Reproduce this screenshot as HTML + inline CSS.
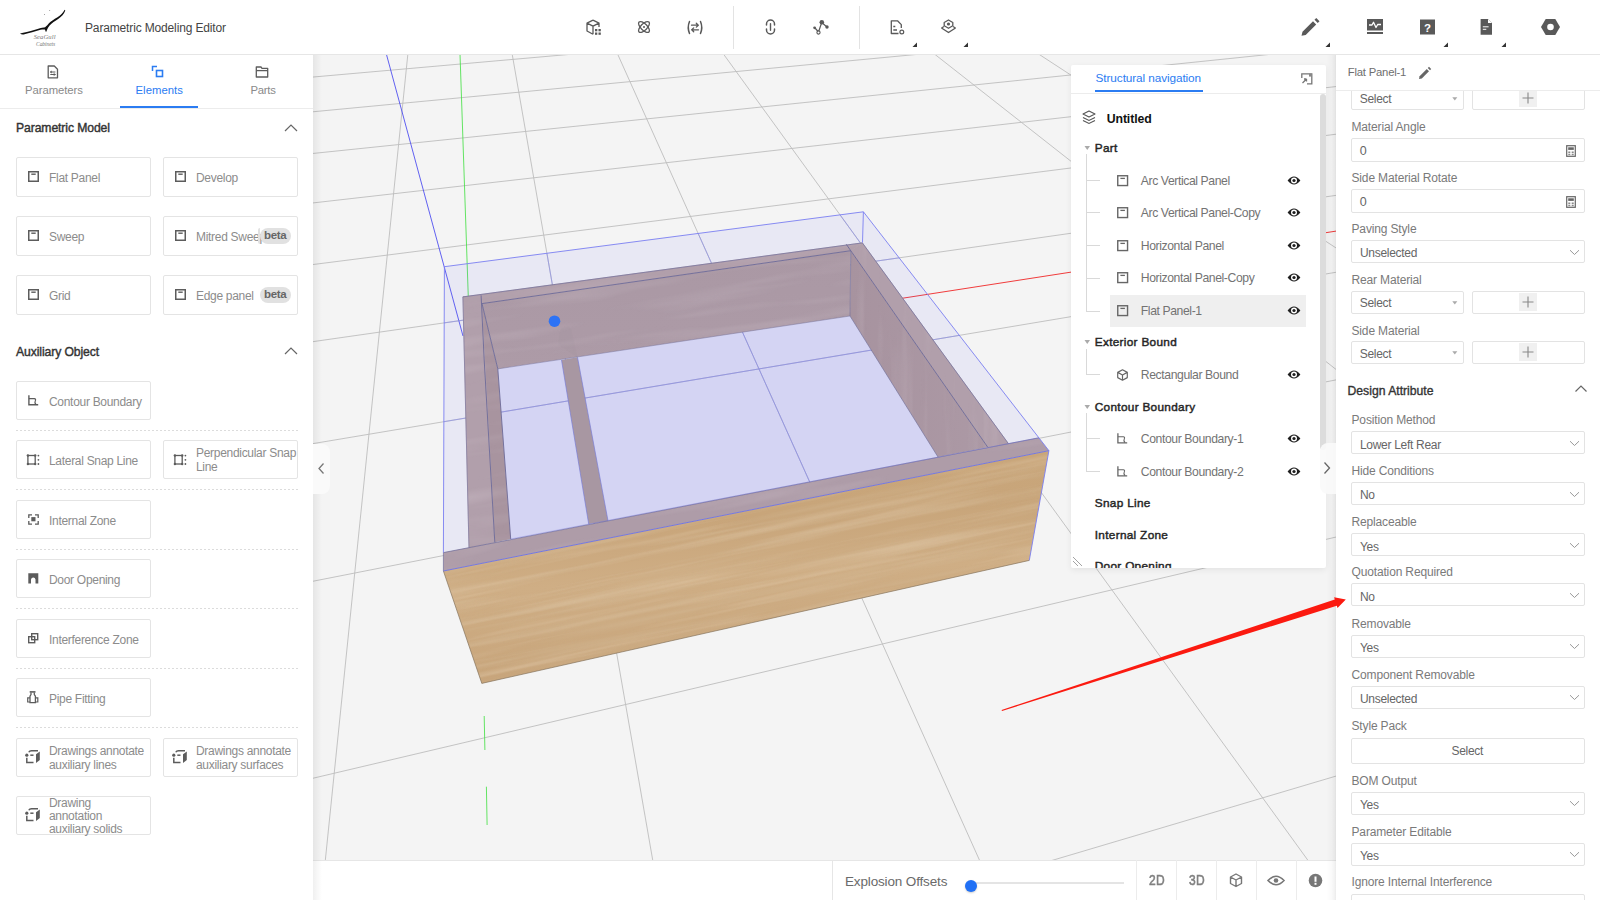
<!DOCTYPE html>
<html><head><meta charset="utf-8"><style>
*{margin:0;padding:0;box-sizing:border-box}
html,body{width:1600px;height:900px;overflow:hidden;background:#fff}
body{position:relative;font-family:"Liberation Sans", sans-serif}
.t{position:absolute;line-height:1;white-space:nowrap}
.b{position:absolute}
svg.b{overflow:visible}
</style></head><body>
<div class="b" style="left:0px;top:0px;width:1600px;height:55px;background:#fff;border-bottom:1px solid #e6e6e6"></div><svg class="b" style="left:15px;top:5px;" width="56" height="46" viewBox="0 0 56 46">
<path d="M5 28.4 C 9 27.9, 14 26.8, 20 24.8 C 23.5 23.7, 26.5 23, 29 22.6 C 30.5 22.3, 31.8 21, 33.5 18.8 C 35.5 16.5, 39 14.3, 42.5 12.3 C 45.5 10.5, 48 8, 49.6 4.8 L 50.3 5.4 C 49 8.8, 46.5 11.6, 43.5 13.7 C 40 16, 36.8 17.8, 34.6 20.4 C 33.3 22, 32.5 23.3, 32 25 L 31 27.3 L 29.9 24.6 C 29 24.3, 27.5 24.3, 25.5 24.8 C 20 26.2, 14 28.4, 9.5 29.3 C 7.5 29.7, 6 29.4, 5 28.4 Z" fill="#111"/>
<circle cx="29.5" cy="9.4" r="0.5" fill="#888"/><circle cx="34.7" cy="5.5" r="0.5" fill="#888"/>
<text x="18.7" y="34.2" font-family="Liberation Serif" font-style="italic" font-size="6.6" fill="#777" letter-spacing="0.1">SeaGull</text>
<text x="21" y="40.6" font-family="Liberation Serif" font-style="italic" font-size="5.6" fill="#777" letter-spacing="-0.1">Cabinets</text>
</svg><div class="t" style="left:85.0px;top:21.8px;font-size:12px;color:#444;font-weight:normal;letter-spacing:-0.15px;">Parametric Modeling Editor</div><svg class="b" style="left:585px;top:19px;" width="18" height="18" viewBox="0 0 18 18">
<path d="M8 1.2 L14 4.2 L14 8 M8 1.2 L2 4.2 L2 12 L8 15.3 M2 4.2 L8 7.2 L14 4.2 M8 7.2 L8 15.3" fill="none" stroke="#595959" stroke-width="1.3" stroke-linejoin="round"/>
<rect x="10" y="10" width="2.3" height="2.3" fill="#595959"/><rect x="13.5" y="10" width="2.3" height="2.3" fill="#595959"/>
<rect x="10" y="13.5" width="2.3" height="2.3" fill="#595959"/><rect x="13.5" y="13.5" width="2.3" height="2.3" fill="#595959"/>
</svg><svg class="b" style="left:636px;top:19px;" width="16" height="16" viewBox="0 0 16 16">
<ellipse cx="8" cy="8" rx="7" ry="3.2" transform="rotate(45 8 8)" fill="none" stroke="#595959" stroke-width="1.3"/>
<ellipse cx="8" cy="8" rx="7" ry="3.2" transform="rotate(-45 8 8)" fill="none" stroke="#595959" stroke-width="1.3"/>
<circle cx="8" cy="8" r="1" fill="#595959"/>
</svg><svg class="b" style="left:686px;top:20px;" width="18" height="15" viewBox="0 0 18 15">
<path d="M3.5 1.5 Q1 7.5 3.5 13.5 M14.5 1.5 Q17 7.5 14.5 13.5" fill="none" stroke="#595959" stroke-width="1.5" stroke-linecap="round"/>
<path d="M5.5 5.2 H12 M10.3 3.3 L12.3 5.2 L10.3 7.1 M12.5 9.8 H6 M7.7 7.9 L5.7 9.8 L7.7 11.7" fill="none" stroke="#595959" stroke-width="1.3" stroke-linecap="round" stroke-linejoin="round"/>
</svg><div class="b" style="left:733px;top:6px;width:1px;height:43px;background:#e3e3e3"></div><div class="b" style="left:859px;top:6px;width:1px;height:43px;background:#e3e3e3"></div><svg class="b" style="left:763px;top:19px;" width="15" height="16" viewBox="0 0 15 16">
<path d="M3.5 6 V5 A4 4 0 0 1 11.5 5 V6 M3.5 10 V11 A4 4 0 0 0 11.5 11 V10" fill="none" stroke="#595959" stroke-width="1.5" stroke-linecap="round"/>
<path d="M7.5 4.8 V11.2" stroke="#595959" stroke-width="1.4" stroke-linecap="round"/>
</svg><svg class="b" style="left:812px;top:19px;" width="18" height="16" viewBox="0 0 18 16">
<path d="M3 9 L6.5 13 L9.7 3.6 L15 8" fill="none" stroke="#595959" stroke-width="1.2"/>
<circle cx="9.8" cy="3.3" r="2.3" fill="#595959"/>
<circle cx="15" cy="8" r="1.7" fill="#595959"/>
<circle cx="2.6" cy="8.8" r="1.4" fill="#595959"/>
<circle cx="6.5" cy="13.5" r="1.6" fill="#fff" stroke="#595959" stroke-width="1.1"/>
</svg><svg class="b" style="left:889px;top:19px;" width="17" height="17" viewBox="0 0 17 17">
<path d="M9.5 14.5 H2.3 V1.8 H8.5 L12.3 5.6 V9" fill="none" stroke="#595959" stroke-width="1.3" stroke-linejoin="round"/>
<path d="M4.3 7.5 H6.3 M4.3 11 H8" stroke="#595959" stroke-width="1.3"/>
<circle cx="12.8" cy="13" r="1.9" fill="none" stroke="#595959" stroke-width="1.2"/>
</svg><svg class="b" style="left:912px;top:42px;" width="6" height="6" viewBox="0 0 6 6"><path d="M5 0.5 V5 H0.5 Z" fill="#333"/></svg><svg class="b" style="left:940px;top:19px;" width="17" height="16" viewBox="0 0 17 16">
<path d="M1.5 9 L8.5 13.5 L15.5 9" fill="none" stroke="#595959" stroke-width="1.4" stroke-linejoin="round"/>
<path d="M4 7.5 L1.5 9 M13 7.5 L15.5 9" stroke="#595959" stroke-width="1.3"/>
<path d="M8.5 1 L12.8 3.5 V6.8 L8.5 9.3 L4.2 6.8 V3.5 Z" fill="none" stroke="#595959" stroke-width="1.3" stroke-linejoin="round"/>
<circle cx="8.5" cy="5" r="1.6" fill="#595959"/>
</svg><svg class="b" style="left:963px;top:42px;" width="6" height="6" viewBox="0 0 6 6"><path d="M5 0.5 V5 H0.5 Z" fill="#333"/></svg><svg class="b" style="left:1300px;top:17px;" width="22" height="20" viewBox="0 0 22 20">
<path d="M1.5 18.8 L2.5 14.8 L13 4.3 L16.2 7.5 L5.7 18 Z" fill="#595959"/>
<path d="M14.5 2.8 L16.3 1 L19.5 4.2 L17.7 6 Z" fill="#595959"/>
</svg><svg class="b" style="left:1325px;top:42px;" width="6" height="6" viewBox="0 0 6 6"><path d="M5 0.5 V5 H0.5 Z" fill="#333"/></svg><svg class="b" style="left:1366px;top:18px;" width="18" height="17" viewBox="0 0 18 17">
<rect x="1" y="1" width="16" height="11.5" fill="#595959"/>
<path d="M3 7 H6 L7.5 4.3 L10 9.5 L11.7 6.5 H15" fill="none" stroke="#fff" stroke-width="1.3" stroke-linejoin="round"/>
<rect x="1" y="14" width="16" height="2" fill="#595959"/>
</svg><svg class="b" style="left:1419px;top:19px;" width="17" height="17" viewBox="0 0 17 17">
<rect x="1" y="0.5" width="15" height="15" fill="#595959"/>
<text x="8.5" y="12.8" text-anchor="middle" font-family="Liberation Sans" font-weight="bold" font-size="11.5" fill="#fff">?</text>
</svg><svg class="b" style="left:1443px;top:42px;" width="6" height="6" viewBox="0 0 6 6"><path d="M5 0.5 V5 H0.5 Z" fill="#333"/></svg><svg class="b" style="left:1480px;top:18px;" width="14" height="18" viewBox="0 0 14 18">
<path d="M0.6 1 H8 L12 5 V16.7 H0.6 Z" fill="#595959"/>
<path d="M8 1 V5 H12" fill="#fff"/>
<path d="M2.8 8.8 H8.6 M2.8 11.3 H6.3" stroke="#fff" stroke-width="1"/>
</svg><svg class="b" style="left:1501px;top:42px;" width="6" height="6" viewBox="0 0 6 6"><path d="M5 0.5 V5 H0.5 Z" fill="#333"/></svg><svg class="b" style="left:1540px;top:18px;" width="21" height="18" viewBox="0 0 21 18">
<path d="M5.7 1 H15.3 L20 9 L15.3 17 H5.7 L1 9 Z" fill="#595959"/>
<circle cx="10.5" cy="9" r="3.3" fill="#fff"/>
</svg><div class="b" style="left:0px;top:55px;width:313px;height:845px;background:#fff"></div><svg class="b" style="left:46px;top:65px;" width="14" height="14" viewBox="0 0 14 14">
<path d="M2.2 1 H8.3 L11.5 4.2 V12.8 H2.2 Z" fill="none" stroke="#5c5c5c" stroke-width="1.3" stroke-linejoin="round"/>
<path d="M4.3 7 H9.4 M4.3 9.5 H9.4" stroke="#5c5c5c" stroke-width="1"/>
<path d="M6 6 L4.3 7 L6 8 M7.7 8.5 L9.4 9.5 L7.7 10.5" fill="none" stroke="#5c5c5c" stroke-width="0.9"/>
</svg><svg class="b" style="left:151px;top:65px;" width="14" height="14" viewBox="0 0 14 14">
<path d="M1.5 6 V1.5 H6" fill="none" stroke="#2b7cf2" stroke-width="1.5"/>
<rect x="5.5" y="5.5" width="6" height="6" fill="none" stroke="#2b7cf2" stroke-width="1.6"/>
</svg><svg class="b" style="left:255px;top:65px;" width="14" height="14" viewBox="0 0 14 14">
<path d="M1.3 2 H6 L7 3.3 H12.7 V12 H1.3 Z" fill="none" stroke="#5c5c5c" stroke-width="1.3" stroke-linejoin="round"/>
<path d="M1.3 5.6 H12.7" stroke="#5c5c5c" stroke-width="1.3"/>
</svg><div class="t" style="left:25.0px;top:85.4px;font-size:11.3px;color:#8a8a8a;font-weight:normal;letter-spacing:-0.05px;">Parameters</div><div class="t" style="left:135.5px;top:85.4px;font-size:11.3px;color:#2b7cf2;font-weight:normal;letter-spacing:0.05px;">Elements</div><div class="t" style="left:250.5px;top:85.4px;font-size:11.3px;color:#8a8a8a;font-weight:normal;letter-spacing:-0.25px;">Parts</div><div class="b" style="left:0px;top:108px;width:313px;height:1px;background:#ececec"></div><div class="b" style="left:120px;top:106px;width:78px;height:2px;background:#2b7cf2"></div><div class="t" style="left:16.0px;top:122.3px;font-size:12.2px;color:#333;font-weight:normal;letter-spacing:-0.1px;-webkit-text-stroke:0.4px #333;">Parametric Model</div><svg class="b" style="left:284px;top:122.5px;" width="14" height="10" viewBox="0 0 14 10"><path d="M1 8 L7 2 L13 8" fill="none" stroke="#666" stroke-width="1.2"/></svg><div class="t" style="left:16.0px;top:346.2px;font-size:12.2px;color:#333;font-weight:normal;letter-spacing:-0.1px;-webkit-text-stroke:0.4px #333;">Auxiliary Object</div><svg class="b" style="left:284px;top:346px;" width="14" height="10" viewBox="0 0 14 10"><path d="M1 8 L7 2 L13 8" fill="none" stroke="#666" stroke-width="1.2"/></svg><div class="b" style="left:16px;top:157px;width:135px;height:40px;background:#fff;border:1px solid #e4e4e4;border-radius:2px"></div><svg class="b" style="left:28px;top:171px;" width="12" height="12" viewBox="0 0 12 12"><rect x="0.75" y="0.75" width="9.5" height="9.5" fill="none" stroke="#5c5c5c" stroke-width="1.5"/><path d="M3.3 3.2 H7.7" stroke="#5c5c5c" stroke-width="1.4"/></svg><div class="t" style="left:49.0px;top:171.8px;font-size:12px;color:#8c8c8c;font-weight:normal;letter-spacing:-0.3px;">Flat Panel</div><div class="b" style="left:163px;top:157px;width:135px;height:40px;background:#fff;border:1px solid #e4e4e4;border-radius:2px"></div><svg class="b" style="left:175px;top:171px;" width="12" height="12" viewBox="0 0 12 12"><rect x="0.75" y="0.75" width="9.5" height="9.5" fill="none" stroke="#5c5c5c" stroke-width="1.5"/><path d="M3.3 3.2 H7.7" stroke="#5c5c5c" stroke-width="1.4"/></svg><div class="t" style="left:196.0px;top:171.8px;font-size:12px;color:#8c8c8c;font-weight:normal;letter-spacing:-0.3px;">Develop</div><div class="b" style="left:16px;top:216px;width:135px;height:40px;background:#fff;border:1px solid #e4e4e4;border-radius:2px"></div><svg class="b" style="left:28px;top:230px;" width="12" height="12" viewBox="0 0 12 12"><rect x="0.75" y="0.75" width="9.5" height="9.5" fill="none" stroke="#5c5c5c" stroke-width="1.5"/><path d="M3.3 3.2 H7.7" stroke="#5c5c5c" stroke-width="1.4"/></svg><div class="t" style="left:49.0px;top:230.8px;font-size:12px;color:#8c8c8c;font-weight:normal;letter-spacing:-0.3px;">Sweep</div><div class="b" style="left:163px;top:216px;width:135px;height:40px;background:#fff;border:1px solid #e4e4e4;border-radius:2px"></div><svg class="b" style="left:175px;top:230px;" width="12" height="12" viewBox="0 0 12 12"><rect x="0.75" y="0.75" width="9.5" height="9.5" fill="none" stroke="#5c5c5c" stroke-width="1.5"/><path d="M3.3 3.2 H7.7" stroke="#5c5c5c" stroke-width="1.4"/></svg><div class="t" style="left:196.0px;top:230.8px;font-size:12px;color:#8c8c8c;font-weight:normal;letter-spacing:-0.3px;">Mitred Sweep</div><div class="b" style="left:16px;top:275px;width:135px;height:40px;background:#fff;border:1px solid #e4e4e4;border-radius:2px"></div><svg class="b" style="left:28px;top:289px;" width="12" height="12" viewBox="0 0 12 12"><rect x="0.75" y="0.75" width="9.5" height="9.5" fill="none" stroke="#5c5c5c" stroke-width="1.5"/><path d="M3.3 3.2 H7.7" stroke="#5c5c5c" stroke-width="1.4"/></svg><div class="t" style="left:49.0px;top:289.8px;font-size:12px;color:#8c8c8c;font-weight:normal;letter-spacing:-0.3px;">Grid</div><div class="b" style="left:163px;top:275px;width:135px;height:40px;background:#fff;border:1px solid #e4e4e4;border-radius:2px"></div><svg class="b" style="left:175px;top:289px;" width="12" height="12" viewBox="0 0 12 12"><rect x="0.75" y="0.75" width="9.5" height="9.5" fill="none" stroke="#5c5c5c" stroke-width="1.5"/><path d="M3.3 3.2 H7.7" stroke="#5c5c5c" stroke-width="1.4"/></svg><div class="t" style="left:196.0px;top:289.8px;font-size:12px;color:#8c8c8c;font-weight:normal;letter-spacing:-0.3px;">Edge panel</div><div class="b" style="left:260px;top:228px;width:31px;height:16px;background:#e1e1e1;border-radius:8px"></div><div class="t" style="left:264.0px;top:230.3px;font-size:11.5px;color:#666;font-weight:bold;letter-spacing:-0.3px;">beta</div><div class="b" style="left:260px;top:287px;width:31px;height:16px;background:#e1e1e1;border-radius:8px"></div><div class="t" style="left:264.0px;top:289.3px;font-size:11.5px;color:#666;font-weight:bold;letter-spacing:-0.3px;">beta</div><div class="b" style="left:258px;top:228px;width:2px;height:16px;background:#e1e1e1;border-radius:8px 0 0 8px"></div><div class="b" style="left:16px;top:381px;width:135px;height:39px;background:#fff;border:1px solid #e4e4e4;border-radius:2px"></div><svg class="b" style="left:28px;top:395px;" width="12" height="12" viewBox="0 0 12 12"><path d="M0.9 0.2 V9.8 H10.2" fill="none" stroke="#5c5c5c" stroke-width="1.4"/><path d="M0.9 3.7 H6.3 Q8.2 4 7.3 5.8 Q6.3 7.5 8 9.6" fill="none" stroke="#5c5c5c" stroke-width="1.2"/></svg><div class="t" style="left:49.0px;top:395.8px;font-size:12px;color:#8c8c8c;font-weight:normal;letter-spacing:-0.3px;">Contour Boundary</div><div class="b" style="left:16px;top:440px;width:135px;height:39px;background:#fff;border:1px solid #e4e4e4;border-radius:2px"></div><svg class="b" style="left:27px;top:454px;" width="13" height="12" viewBox="0 0 13 12"><rect x="0.9" y="1.5" width="7.3" height="8.5" fill="none" stroke="#5c5c5c" stroke-width="1.3"/><circle cx="0.9" cy="1.5" r="1.2" fill="#5c5c5c"/><circle cx="8.2" cy="1.5" r="1.2" fill="#5c5c5c"/><circle cx="0.9" cy="10" r="1.2" fill="#5c5c5c"/><circle cx="8.2" cy="10" r="1.2" fill="#5c5c5c"/><circle cx="11.4" cy="1.6" r="0.9" fill="#5c5c5c"/><circle cx="11.4" cy="5.8" r="0.9" fill="#5c5c5c"/><circle cx="11.4" cy="10" r="0.9" fill="#5c5c5c"/></svg><div class="t" style="left:49.0px;top:454.8px;font-size:12px;color:#8c8c8c;font-weight:normal;letter-spacing:-0.3px;">Lateral Snap Line</div><div class="b" style="left:163px;top:440px;width:135px;height:39px;background:#fff;border:1px solid #e4e4e4;border-radius:2px"></div><svg class="b" style="left:174px;top:454px;" width="13" height="12" viewBox="0 0 13 12"><rect x="0.9" y="1.5" width="7.3" height="8.5" fill="none" stroke="#5c5c5c" stroke-width="1.3"/><circle cx="0.9" cy="1.5" r="1.2" fill="#5c5c5c"/><circle cx="8.2" cy="1.5" r="1.2" fill="#5c5c5c"/><circle cx="0.9" cy="10" r="1.2" fill="#5c5c5c"/><circle cx="8.2" cy="10" r="1.2" fill="#5c5c5c"/><circle cx="11.4" cy="1.6" r="0.9" fill="#5c5c5c"/><circle cx="11.4" cy="5.8" r="0.9" fill="#5c5c5c"/><circle cx="11.4" cy="10" r="0.9" fill="#5c5c5c"/></svg><div class="t" style="left:196.0px;top:447.0px;font-size:12px;color:#8c8c8c;font-weight:normal;letter-spacing:-0.3px;">Perpendicular Snap</div><div class="t" style="left:196.0px;top:460.6px;font-size:12px;color:#8c8c8c;font-weight:normal;letter-spacing:-0.3px;">Line</div><div class="b" style="left:16px;top:500px;width:135px;height:39px;background:#fff;border:1px solid #e4e4e4;border-radius:2px"></div><svg class="b" style="left:28px;top:514px;" width="12" height="12" viewBox="0 0 12 12"><path d="M0.8 4 V0.8 H4 M7 0.8 H10.2 V4 M10.2 7 V10.2 H7 M4 10.2 H0.8 V7" fill="none" stroke="#5c5c5c" stroke-width="1.3"/><rect x="3.3" y="3.1" width="4.2" height="4.2" fill="#5c5c5c"/></svg><div class="t" style="left:49.0px;top:514.8px;font-size:12px;color:#8c8c8c;font-weight:normal;letter-spacing:-0.3px;">Internal Zone</div><div class="b" style="left:16px;top:559px;width:135px;height:39px;background:#fff;border:1px solid #e4e4e4;border-radius:2px"></div><svg class="b" style="left:28px;top:573px;" width="12" height="12" viewBox="0 0 12 12"><path d="M0.3 0.3 H10.3 V10.4 H7.5 V6.5 A2.3 2.5 0 0 0 3 6.5 V10.4 H0.3 Z" fill="#5c5c5c"/></svg><div class="t" style="left:49.0px;top:573.8px;font-size:12px;color:#8c8c8c;font-weight:normal;letter-spacing:-0.3px;">Door Opening</div><div class="b" style="left:16px;top:619px;width:135px;height:39px;background:#fff;border:1px solid #e4e4e4;border-radius:2px"></div><svg class="b" style="left:28px;top:632.5px;" width="12" height="12" viewBox="0 0 12 12"><rect x="3.7" y="0.7" width="6" height="6" fill="none" stroke="#5c5c5c" stroke-width="1.4"/><rect x="0.7" y="3.7" width="6" height="6" fill="none" stroke="#5c5c5c" stroke-width="1.4"/></svg><div class="t" style="left:49.0px;top:633.8px;font-size:12px;color:#8c8c8c;font-weight:normal;letter-spacing:-0.3px;">Interference Zone</div><div class="b" style="left:16px;top:678px;width:135px;height:39px;background:#fff;border:1px solid #e4e4e4;border-radius:2px"></div><svg class="b" style="left:27.3px;top:691px;" width="12" height="12" viewBox="0 0 12 12"><path d="M2.7 0.9 H8.5" stroke="#5c5c5c" stroke-width="1.6"/><path d="M4 1.6 V3.5 L3 5.2 V11.6 H8.4 V5.2 L7.3 3.5 V1.6" fill="none" stroke="#5c5c5c" stroke-width="1.3"/><path d="M3 6.8 H0.7 V11 H3 M8.4 6.8 H10.8 V11 H8.4" fill="none" stroke="#5c5c5c" stroke-width="1.2"/></svg><div class="t" style="left:49.0px;top:692.8px;font-size:12px;color:#8c8c8c;font-weight:normal;letter-spacing:-0.3px;">Pipe Fitting</div><div class="b" style="left:16px;top:738px;width:135px;height:39px;background:#fff;border:1px solid #e4e4e4;border-radius:2px"></div><svg class="b" style="left:25px;top:750px;" width="16" height="14" viewBox="0 0 16 14"><path d="M3.8 2.3 Q4.5 0.8 6.5 0.8 H13" fill="none" stroke="#5c5c5c" stroke-width="1.5"/><circle cx="1.8" cy="5.2" r="1.6" fill="#5c5c5c"/><path d="M5.3 5.2 H8.5" stroke="#5c5c5c" stroke-width="1.5"/><path d="M1.8 7.8 V12.5 H8.5" fill="none" stroke="#5c5c5c" stroke-width="1.5"/><path d="M11 4.3 L14.8 1.5 V10 L11 13 Z" fill="#5c5c5c"/></svg><div class="t" style="left:49.0px;top:745.0px;font-size:12px;color:#8c8c8c;font-weight:normal;letter-spacing:-0.3px;">Drawings annotate</div><div class="t" style="left:49.0px;top:758.6px;font-size:12px;color:#8c8c8c;font-weight:normal;letter-spacing:-0.3px;">auxiliary lines</div><div class="b" style="left:163px;top:738px;width:135px;height:39px;background:#fff;border:1px solid #e4e4e4;border-radius:2px"></div><svg class="b" style="left:172px;top:750px;" width="16" height="14" viewBox="0 0 16 14"><path d="M3.8 2.3 Q4.5 0.8 6.5 0.8 H13" fill="none" stroke="#5c5c5c" stroke-width="1.5"/><circle cx="1.8" cy="5.2" r="1.6" fill="#5c5c5c"/><path d="M5.3 5.2 H8.5" stroke="#5c5c5c" stroke-width="1.5"/><path d="M1.8 7.8 V12.5 H8.5" fill="none" stroke="#5c5c5c" stroke-width="1.5"/><path d="M11 4.3 L14.8 1.5 V10 L11 13 Z" fill="#5c5c5c"/></svg><div class="t" style="left:196.0px;top:745.0px;font-size:12px;color:#8c8c8c;font-weight:normal;letter-spacing:-0.3px;">Drawings annotate</div><div class="t" style="left:196.0px;top:758.6px;font-size:12px;color:#8c8c8c;font-weight:normal;letter-spacing:-0.3px;">auxiliary surfaces</div><div class="b" style="left:16px;top:796px;width:135px;height:39px;background:#fff;border:1px solid #e4e4e4;border-radius:2px"></div><svg class="b" style="left:25px;top:808px;" width="16" height="14" viewBox="0 0 16 14"><path d="M3.8 2.3 Q4.5 0.8 6.5 0.8 H13" fill="none" stroke="#5c5c5c" stroke-width="1.5"/><circle cx="1.8" cy="5.2" r="1.6" fill="#5c5c5c"/><path d="M5.3 5.2 H8.5" stroke="#5c5c5c" stroke-width="1.5"/><path d="M1.8 7.8 V12.5 H8.5" fill="none" stroke="#5c5c5c" stroke-width="1.5"/><path d="M11 4.3 L14.8 1.5 V10 L11 13 Z" fill="#5c5c5c"/></svg><div class="t" style="left:49.0px;top:796.5px;font-size:12px;color:#8c8c8c;font-weight:normal;letter-spacing:-0.3px;">Drawing</div><div class="t" style="left:49.0px;top:810.2px;font-size:12px;color:#8c8c8c;font-weight:normal;letter-spacing:-0.3px;">annotation</div><div class="t" style="left:49.0px;top:823.3px;font-size:12px;color:#8c8c8c;font-weight:normal;letter-spacing:-0.3px;">auxiliary solids</div><div class="b" style="left:16px;top:430px;width:282px;height:1px;background-image:linear-gradient(to right,#dcdcdc 50%,transparent 50%);background-size:4px 1px"></div><div class="b" style="left:16px;top:489px;width:282px;height:1px;background-image:linear-gradient(to right,#dcdcdc 50%,transparent 50%);background-size:4px 1px"></div><div class="b" style="left:16px;top:549px;width:282px;height:1px;background-image:linear-gradient(to right,#dcdcdc 50%,transparent 50%);background-size:4px 1px"></div><div class="b" style="left:16px;top:608px;width:282px;height:1px;background-image:linear-gradient(to right,#dcdcdc 50%,transparent 50%);background-size:4px 1px"></div><div class="b" style="left:16px;top:668px;width:282px;height:1px;background-image:linear-gradient(to right,#dcdcdc 50%,transparent 50%);background-size:4px 1px"></div><div class="b" style="left:16px;top:727px;width:282px;height:1px;background-image:linear-gradient(to right,#dcdcdc 50%,transparent 50%);background-size:4px 1px"></div><svg class="b" style="left:0;top:0" width="1600" height="900" viewBox="0 0 1600 900"><clipPath id="vclip"><rect x="313" y="55" width="1023" height="805"/></clipPath><defs>
<filter id="grainA" x="0" y="0" width="100%" height="100%"><feTurbulence type="fractalNoise" baseFrequency="0.004 0.13" numOctaves="3" seed="7"/><feColorMatrix type="matrix" values="0 0 0 0 0.85  0 0 0 0 0.72  0 0 0 0 0.55  0 0 1.6 0 -0.72"/><feGaussianBlur stdDeviation="0.4"/></filter>
<filter id="grainA2" x="0" y="0" width="100%" height="100%"><feTurbulence type="fractalNoise" baseFrequency="0.004 0.13" numOctaves="3" seed="19"/><feColorMatrix type="matrix" values="0 0 0 0 0.68  0 0 0 0 0.53  0 0 0 0 0.35  0 0 -1.6 0 0.86"/><feGaussianBlur stdDeviation="0.4"/></filter>
<filter id="grainB" x="0" y="0" width="100%" height="100%"><feTurbulence type="fractalNoise" baseFrequency="0.006 0.09" numOctaves="3" seed="11"/><feColorMatrix type="matrix" values="0 0 0 0 0.78  0 0 0 0 0.70  0 0 0 0 0.76  0 0 1.5 0 -0.7"/><feGaussianBlur stdDeviation="0.8"/></filter>
<filter id="grainC" x="0" y="0" width="100%" height="100%"><feTurbulence type="fractalNoise" baseFrequency="0.09 0.006" numOctaves="3" seed="5"/><feColorMatrix type="matrix" values="0 0 0 0 0.62  0 0 0 0 0.53  0 0 0 0 0.59  -1.5 0 0 0 0.78"/></filter>
<linearGradient id="frontface" x1="0" y1="0" x2="0.15" y2="1">
<stop offset="0" stop-color="#caa77b"/><stop offset="0.35" stop-color="#c8a57a"/><stop offset="0.6" stop-color="#cfae85"/><stop offset="1" stop-color="#c7a47a"/>
</linearGradient>
<linearGradient id="backface" x1="0" y1="0" x2="0" y2="1">
<stop offset="0" stop-color="#aa98a4"/><stop offset="1" stop-color="#ad9ba7"/>
</linearGradient>
<linearGradient id="rightface" x1="0" y1="0" x2="1" y2="0">
<stop offset="0" stop-color="#a7939f"/><stop offset="1" stop-color="#ac99a5"/>
</linearGradient>
</defs><g clip-path="url(#vclip)"><rect x="313" y="55" width="1023" height="805" fill="#f4f4f4"/><line x1="300.0" y1="78.2" x2="1340.0" y2="-13.7" stroke="#bdbdbd" stroke-width="0.9"/><line x1="300.0" y1="113.0" x2="1340.0" y2="14.2" stroke="#bdbdbd" stroke-width="0.9"/><line x1="300.0" y1="154.8" x2="1340.0" y2="47.1" stroke="#bdbdbd" stroke-width="0.9"/><line x1="300.0" y1="204.4" x2="1340.0" y2="86.1" stroke="#bdbdbd" stroke-width="0.9"/><line x1="300.0" y1="266.2" x2="1340.0" y2="133.7" stroke="#bdbdbd" stroke-width="0.9"/><line x1="300.0" y1="343.5" x2="1340.0" y2="194.8" stroke="#bdbdbd" stroke-width="0.9"/><line x1="300.0" y1="445.8" x2="1340.0" y2="271.6" stroke="#bdbdbd" stroke-width="0.9"/><line x1="300.0" y1="583.8" x2="1340.0" y2="379.1" stroke="#bdbdbd" stroke-width="0.9"/><line x1="300.0" y1="781.3" x2="1340.0" y2="536.1" stroke="#bdbdbd" stroke-width="0.9"/><line x1="300.0" y1="1083.8" x2="1340.0" y2="774.9" stroke="#bdbdbd" stroke-width="0.9"/><line x1="409.3" y1="40.0" x2="323.3" y2="880.0" stroke="#bdbdbd" stroke-width="0.9"/><line x1="509.7" y1="40.0" x2="656.2" y2="880.0" stroke="#bdbdbd" stroke-width="0.9"/><line x1="611.3" y1="40.0" x2="988.4" y2="880.0" stroke="#bdbdbd" stroke-width="0.9"/><line x1="713.3" y1="40.0" x2="1322.2" y2="880.0" stroke="#bdbdbd" stroke-width="0.9"/><line x1="916.6" y1="40.0" x2="1986.1" y2="880.0" stroke="#bdbdbd" stroke-width="0.9"/><line x1="1017.1" y1="40.0" x2="2305.4" y2="880.0" stroke="#bdbdbd" stroke-width="0.9"/><line x1="460" y1="54" x2="468.4" y2="300" stroke="#48e048" stroke-width="0.85"/><line x1="484.2" y1="716" x2="484.9" y2="750" stroke="#48e048" stroke-width="0.85"/><line x1="486.4" y1="786.7" x2="487.1" y2="825" stroke="#48e048" stroke-width="0.85"/><line x1="386.4" y1="54.2" x2="463" y2="336" stroke="#4646f0" stroke-width="0.85"/><line x1="902" y1="298.3" x2="1340" y2="230.5" stroke="#f03c3c" stroke-width="1"/><polygon points="444.4,266.7 863.4,211.8 1048.9,450.7 443.4,571.0" fill="#6a6af0" fill-opacity="0.085"/><clipPath id="bbclip"><polygon points="444.4,266.7 863.4,211.8 1048.9,450.7 443.4,571.0"/></clipPath><g clip-path="url(#bbclip)" stroke="#8d90e8" stroke-width="0.9" stroke-opacity="0.7"><line x1="300.0" y1="78.2" x2="1340.0" y2="-13.7"/><line x1="300.0" y1="113.0" x2="1340.0" y2="14.2"/><line x1="300.0" y1="154.8" x2="1340.0" y2="47.1"/><line x1="300.0" y1="204.4" x2="1340.0" y2="86.1"/><line x1="300.0" y1="266.2" x2="1340.0" y2="133.7"/><line x1="300.0" y1="343.5" x2="1340.0" y2="194.8"/><line x1="300.0" y1="445.8" x2="1340.0" y2="271.6"/><line x1="300.0" y1="583.8" x2="1340.0" y2="379.1"/><line x1="300.0" y1="781.3" x2="1340.0" y2="536.1"/><line x1="300.0" y1="1083.8" x2="1340.0" y2="774.9"/><line x1="409.3" y1="40.0" x2="323.3" y2="880.0"/><line x1="509.7" y1="40.0" x2="656.2" y2="880.0"/><line x1="611.3" y1="40.0" x2="988.4" y2="880.0"/><line x1="713.3" y1="40.0" x2="1322.2" y2="880.0"/><line x1="916.6" y1="40.0" x2="1986.1" y2="880.0"/><line x1="1017.1" y1="40.0" x2="2305.4" y2="880.0"/></g><polygon points="497.8,368.9 850.0,316.0 938.0,457.0 510.7,539.0" fill="#7070f0" fill-opacity="0.17"/><polygon points="482.0,303.6 850.8,250.7 850.0,316.0 497.8,368.9" fill="url(#backface)"/><polygon points="850.8,250.7 987.8,447.3 938.0,457.0 850.0,316.0" fill="url(#rightface)"/><polygon points="481.1,295.3 494.8,542.3 510.7,539.0 497.8,368.9 482.0,303.6" fill="#a8949f"/><polygon points="462.9,296.9 862.4,242.9 850.8,250.7 482.0,303.6" fill="#b19fab" stroke="#b19fab" stroke-width="0.7"/><polygon points="862.4,242.9 1008.3,443.5 987.8,447.3 850.8,250.7" fill="#b19fab" stroke="#b19fab" stroke-width="0.7"/><polygon points="462.9,296.9 481.1,295.3 494.8,542.3 469.0,547.7" fill="#b19fab" stroke="#b19fab" stroke-width="0.7"/><path d="M558.5 345 L559.5 332 Q565 323 571 329 L577.5 357.3 Z" fill="#a898a3" fill-opacity="0.55"/><polygon points="561.5,360.0 577.5,357.3 608.1,521.3 588.7,524.0" fill="#a897a2"/><line x1="561.5" y1="360" x2="588.7" y2="524" stroke="#7579d8" stroke-width="0.8" stroke-opacity="0.8"/><line x1="577.5" y1="357.3" x2="608.1" y2="521.3" stroke="#7579d8" stroke-width="0.8" stroke-opacity="0.8"/><clipPath id="mclip"><polygon points="462.9,296.9 862.4,242.9 850.8,250.7 850.0,316.0 497.8,368.9 510.7,539.0 469.0,547.7"/></clipPath><g clip-path="url(#mclip)"><g transform="rotate(-8 650 330)"><rect x="420" y="200" width="480" height="400" filter="url(#grainB)" opacity="0.3"/></g></g><clipPath id="rclip"><polygon points="862.4,242.9 1008.3,443.5 938.0,457.0 850.0,316.0 850.8,250.7"/></clipPath><g clip-path="url(#rclip)"><g><rect x="760" y="150" width="360" height="420" filter="url(#grainC)" opacity="0.35"/></g></g><polygon points="443.4,552.6 1038.9,437.8 1048.9,450.7 443.4,571.0" fill="#ae9ca8"/><clipPath id="ftclip"><polygon points="443.4,552.6 1038.9,437.8 1048.9,450.7 443.4,571.0"/></clipPath><g clip-path="url(#ftclip)"><g transform="rotate(-11 745 505)"><rect x="420" y="420" width="650" height="160" filter="url(#grainB)" opacity="0.3"/></g></g><polygon points="443.4,571.0 1048.9,450.7 1029.3,560.4 481.8,683.4" fill="url(#frontface)"/><clipPath id="ffclip"><polygon points="443.4,571.0 1048.9,450.7 1029.3,560.4 481.8,683.4"/></clipPath><g clip-path="url(#ffclip)"><g transform="rotate(-11.6 745 565)"><rect x="400" y="380" width="700" height="380" filter="url(#grainA)" opacity="0.5"/><rect x="400" y="380" width="700" height="380" filter="url(#grainA2)" opacity="0.5"/></g></g><line x1="482" y1="303.6" x2="850.8" y2="250.7" stroke="#6c6a98" stroke-width="0.9" stroke-opacity="1"/><line x1="481.1" y1="295.3" x2="484.2" y2="360" stroke="#6c6a98" stroke-width="0.9" stroke-opacity="1"/><line x1="484.2" y1="360" x2="494.8" y2="542.3" stroke="#6c6a98" stroke-width="0.9" stroke-opacity="1"/><line x1="482" y1="303.6" x2="497.8" y2="368.9" stroke="#6c6a98" stroke-width="0.9" stroke-opacity="1"/><line x1="497.8" y1="368.9" x2="510.7" y2="539" stroke="#6c6a98" stroke-width="0.9" stroke-opacity="1"/><line x1="850.8" y1="250.7" x2="850" y2="316" stroke="#6c6a98" stroke-width="0.9" stroke-opacity="0.6"/><line x1="846.3" y1="244.3" x2="987.8" y2="447.3" stroke="#6c6a98" stroke-width="0.9" stroke-opacity="1"/><line x1="862.4" y1="242.9" x2="1008.3" y2="443.5" stroke="#6c6a98" stroke-width="0.9" stroke-opacity="0.75"/><line x1="850" y1="316" x2="938" y2="457" stroke="#6c6a98" stroke-width="0.9" stroke-opacity="0.7"/><line x1="497.8" y1="368.9" x2="850" y2="316" stroke="#6c6a98" stroke-width="0.9" stroke-opacity="0.5"/><line x1="462.9" y1="296.9" x2="469" y2="547.7" stroke="#6c6a98" stroke-width="0.9" stroke-opacity="0.6"/><line x1="443.4" y1="552.6" x2="1038.9" y2="437.8" stroke="#6c6a98" stroke-width="0.9" stroke-opacity="0.8"/><line x1="443.4" y1="571" x2="481.8" y2="683.4" stroke="#7d6a55" stroke-width="0.9" stroke-opacity="0.7"/><line x1="481.8" y1="683.4" x2="1029.3" y2="560.4" stroke="#7d6a55" stroke-width="0.9" stroke-opacity="0.7"/><line x1="462.9" y1="296.9" x2="862.4" y2="242.9" stroke="#6c6a98" stroke-width="0.9" stroke-opacity="0.75"/><line x1="444.4" y1="266.7" x2="863.4" y2="211.8" stroke="#7b7ff2" stroke-width="0.9" stroke-opacity="1"/><line x1="863.4" y1="211.8" x2="1048.9" y2="450.7" stroke="#7b7ff2" stroke-width="0.9" stroke-opacity="1"/><line x1="444.4" y1="266.7" x2="443.4" y2="552.6" stroke="#7b7ff2" stroke-width="0.9" stroke-opacity="1"/><line x1="443.4" y1="552.6" x2="443.4" y2="571" stroke="#6c6a98" stroke-width="0.8" stroke-opacity="0.8"/><line x1="863.4" y1="211.8" x2="862.5" y2="242.5" stroke="#7b7ff2" stroke-width="0.9" stroke-opacity="1"/><line x1="443.4" y1="571" x2="1048.9" y2="450.7" stroke="#7478e0" stroke-width="1.0" stroke-opacity="1"/><line x1="1048.9" y1="450.7" x2="1029.3" y2="560.4" stroke="#7b7ff2" stroke-width="0.9" stroke-opacity="1"/><line x1="510.7" y1="539" x2="1038.9" y2="437.8" stroke="#7d7fe8" stroke-width="0.7" stroke-opacity="0.5"/><circle cx="554.5" cy="321.2" r="5.8" fill="#2d73f5"/></g></svg><div class="b" style="left:313px;top:55px;width:9px;height:845px;background:linear-gradient(to right,rgba(0,0,0,0.06),rgba(0,0,0,0))"></div><div class="b" style="left:313px;top:444px;width:17px;height:50px;background:#fafafa;border-radius:0 8px 8px 0"></div><svg class="b" style="left:317px;top:462px;" width="9" height="13" viewBox="0 0 9 13"><path d="M6.5 1.5 L2 6.5 L6.5 11.5" fill="none" stroke="#777" stroke-width="1.3"/></svg><div class="b" style="left:313px;top:860px;width:1023px;height:40px;background:#fff;border-top:1px solid #e6e6e6"></div><div class="b" style="left:832px;top:860px;width:1px;height:40px;background:#e6e6e6"></div><div class="b" style="left:313px;top:860px;width:9px;height:40px;background:linear-gradient(to right,rgba(0,0,0,0.06),rgba(0,0,0,0))"></div><div class="t" style="left:845.0px;top:874.9px;font-size:13.5px;color:#6a6a6a;font-weight:normal;letter-spacing:-0.15px;">Explosion Offsets</div><div class="b" style="left:976px;top:882px;width:148px;height:2px;background:#e4e4e4"></div><div class="b" style="left:964.5px;top:880px;width:12px;height:12px;background:#2070f5;border-radius:50%;box-shadow:0 1px 2px rgba(0,0,0,0.2)"></div><div class="b" style="left:1136px;top:860px;width:1px;height:40px;background:#ececec"></div><div class="b" style="left:1176px;top:860px;width:1px;height:40px;background:#ececec"></div><div class="b" style="left:1216px;top:860px;width:1px;height:40px;background:#ececec"></div><div class="b" style="left:1256px;top:860px;width:1px;height:40px;background:#ececec"></div><div class="b" style="left:1296px;top:860px;width:1px;height:40px;background:#ececec"></div><div class="t" style="left:1149.0px;top:872.3px;font-size:15px;color:#808080;font-weight:normal;letter-spacing:0.3px;transform:scaleX(0.8);transform-origin:0 0;-webkit-text-stroke:0.6px #808080;">2D</div><div class="t" style="left:1189.0px;top:872.3px;font-size:15px;color:#808080;font-weight:normal;letter-spacing:0.3px;transform:scaleX(0.8);transform-origin:0 0;-webkit-text-stroke:0.6px #808080;">3D</div><svg class="b" style="left:1229px;top:873px;" width="14" height="15" viewBox="0 0 14 15"><path d="M7 1 L12.5 4 V10.5 L7 13.5 L1.5 10.5 V4 Z M1.5 4 L7 7 L12.5 4 M7 7 V13.5" fill="none" stroke="#777" stroke-width="1.4" stroke-linejoin="round"/></svg><svg class="b" style="left:1267px;top:874px;" width="18" height="13" viewBox="0 0 18 13"><path d="M1 6.5 Q9 -2 17 6.5 Q9 15 1 6.5 Z" fill="none" stroke="#777" stroke-width="1.6"/><circle cx="9" cy="6.5" r="2.3" fill="#777"/></svg><svg class="b" style="left:1308px;top:873px;" width="15" height="15" viewBox="0 0 15 15"><circle cx="7.5" cy="7.5" r="6.8" fill="#777"/><rect x="6.5" y="3.5" width="2" height="5.3" fill="#fff"/><rect x="6.5" y="9.8" width="2" height="2" fill="#fff"/></svg><div class="b" style="left:1071px;top:65px;width:255px;height:503px;background:#fff;border-radius:2px;box-shadow:0 2px 6px rgba(0,0,0,0.07)"></div><div class="t" style="left:1095.6px;top:72.7px;font-size:11.8px;color:#2b7cf2;font-weight:normal;letter-spacing:-0.1px;">Structural navigation</div><div class="b" style="left:1095px;top:90px;width:108px;height:2px;background:#2b7cf2"></div><div class="b" style="left:1071px;top:93px;width:255px;height:1px;background:#ececec"></div><svg class="b" style="left:1299.5px;top:72px;" width="14" height="14" viewBox="0 0 14 14"><path d="M1.8 6 V1.8 H11.8 V11.8 H7" fill="none" stroke="#777" stroke-width="1.3"/><rect x="9" y="1.8" width="2.8" height="2.8" fill="#888"/><path d="M2.5 11 L6.5 7 M6.5 7 V9.5 M6.5 7 H4" fill="none" stroke="#777" stroke-width="1.3"/></svg><div class="b" style="left:1320px;top:94px;width:6px;height:356px;background:#dcdcdc;border-radius:3px 3px 3px 3px"></div><svg class="b" style="left:1081px;top:110px;" width="16" height="15" viewBox="0 0 16 15"><path d="M8 1 L14 4 L8 7 L2 4 Z" fill="none" stroke="#555" stroke-width="1.1" stroke-linejoin="round"/>
<path d="M2 7.5 L8 10.5 L14 7.5 M2 10.5 L8 13.5 L14 10.5" fill="none" stroke="#555" stroke-width="1.1"/></svg><div class="t" style="left:1106.7px;top:112.6px;font-size:12.3px;color:#111;font-weight:bold;letter-spacing:-0.1px;">Untitled</div><svg class="b" style="left:1083.5px;top:145.0px;" width="7" height="6" viewBox="0 0 7 6"><path d="M0.5 1 H6 L3.25 5 Z" fill="#aaa"/></svg><div class="t" style="left:1094.8px;top:143.0px;font-size:11.8px;color:#262626;font-weight:normal;letter-spacing:0.3px;-webkit-text-stroke:0.45px #262626;">Part</div><div class="b" style="left:1086px;top:154px;width:1px;height:157px;background:#d9d9d9"></div><div class="b" style="left:1086px;top:180px;width:14px;height:1px;background:#d9d9d9"></div><svg class="b" style="left:1117px;top:174.5px;" width="12" height="12" viewBox="0 0 12 12"><rect x="0.75" y="0.75" width="9.8" height="9.8" fill="none" stroke="#666" stroke-width="1.4"/><path d="M3.4 3.4 H7.9" stroke="#666" stroke-width="1.3"/></svg><div class="t" style="left:1140.8px;top:174.7px;font-size:12.2px;color:#737373;font-weight:normal;letter-spacing:-0.4px;">Arc Vertical Panel</div><svg class="b" style="left:1287.2px;top:174.5px;" width="14" height="11" viewBox="0 0 14 11"><path d="M0.6 5.5 Q7 -2.3 13.4 5.5 Q7 13.3 0.6 5.5 Z" fill="#1f1f1f"/><circle cx="7" cy="5.5" r="3" fill="#fff"/><circle cx="7" cy="5.5" r="1.6" fill="#1f1f1f"/></svg><div class="b" style="left:1086px;top:212px;width:14px;height:1px;background:#d9d9d9"></div><svg class="b" style="left:1117px;top:207.0px;" width="12" height="12" viewBox="0 0 12 12"><rect x="0.75" y="0.75" width="9.8" height="9.8" fill="none" stroke="#666" stroke-width="1.4"/><path d="M3.4 3.4 H7.9" stroke="#666" stroke-width="1.3"/></svg><div class="t" style="left:1140.8px;top:207.2px;font-size:12.2px;color:#737373;font-weight:normal;letter-spacing:-0.4px;">Arc Vertical Panel-Copy</div><svg class="b" style="left:1287.2px;top:207.0px;" width="14" height="11" viewBox="0 0 14 11"><path d="M0.6 5.5 Q7 -2.3 13.4 5.5 Q7 13.3 0.6 5.5 Z" fill="#1f1f1f"/><circle cx="7" cy="5.5" r="3" fill="#fff"/><circle cx="7" cy="5.5" r="1.6" fill="#1f1f1f"/></svg><div class="b" style="left:1086px;top:245px;width:14px;height:1px;background:#d9d9d9"></div><svg class="b" style="left:1117px;top:239.5px;" width="12" height="12" viewBox="0 0 12 12"><rect x="0.75" y="0.75" width="9.8" height="9.8" fill="none" stroke="#666" stroke-width="1.4"/><path d="M3.4 3.4 H7.9" stroke="#666" stroke-width="1.3"/></svg><div class="t" style="left:1140.8px;top:239.7px;font-size:12.2px;color:#737373;font-weight:normal;letter-spacing:-0.4px;">Horizontal Panel</div><svg class="b" style="left:1287.2px;top:239.5px;" width="14" height="11" viewBox="0 0 14 11"><path d="M0.6 5.5 Q7 -2.3 13.4 5.5 Q7 13.3 0.6 5.5 Z" fill="#1f1f1f"/><circle cx="7" cy="5.5" r="3" fill="#fff"/><circle cx="7" cy="5.5" r="1.6" fill="#1f1f1f"/></svg><div class="b" style="left:1086px;top:278px;width:14px;height:1px;background:#d9d9d9"></div><svg class="b" style="left:1117px;top:272.1px;" width="12" height="12" viewBox="0 0 12 12"><rect x="0.75" y="0.75" width="9.8" height="9.8" fill="none" stroke="#666" stroke-width="1.4"/><path d="M3.4 3.4 H7.9" stroke="#666" stroke-width="1.3"/></svg><div class="t" style="left:1140.8px;top:272.3px;font-size:12.2px;color:#737373;font-weight:normal;letter-spacing:-0.4px;">Horizontal Panel-Copy</div><svg class="b" style="left:1287.2px;top:272.1px;" width="14" height="11" viewBox="0 0 14 11"><path d="M0.6 5.5 Q7 -2.3 13.4 5.5 Q7 13.3 0.6 5.5 Z" fill="#1f1f1f"/><circle cx="7" cy="5.5" r="3" fill="#fff"/><circle cx="7" cy="5.5" r="1.6" fill="#1f1f1f"/></svg><div class="b" style="left:1110px;top:295px;width:196px;height:32px;background:#efefef"></div><div class="b" style="left:1086px;top:311px;width:14px;height:1px;background:#d9d9d9"></div><svg class="b" style="left:1117px;top:305.1px;" width="12" height="12" viewBox="0 0 12 12"><rect x="0.75" y="0.75" width="9.8" height="9.8" fill="none" stroke="#666" stroke-width="1.4"/><path d="M3.4 3.4 H7.9" stroke="#666" stroke-width="1.3"/></svg><div class="t" style="left:1140.8px;top:305.3px;font-size:12.2px;color:#737373;font-weight:normal;letter-spacing:-0.4px;">Flat Panel-1</div><svg class="b" style="left:1287.2px;top:305.1px;" width="14" height="11" viewBox="0 0 14 11"><path d="M0.6 5.5 Q7 -2.3 13.4 5.5 Q7 13.3 0.6 5.5 Z" fill="#1f1f1f"/><circle cx="7" cy="5.5" r="3" fill="#fff"/><circle cx="7" cy="5.5" r="1.6" fill="#1f1f1f"/></svg><svg class="b" style="left:1083.5px;top:339.3px;" width="7" height="6" viewBox="0 0 7 6"><path d="M0.5 1 H6 L3.25 5 Z" fill="#aaa"/></svg><div class="t" style="left:1094.8px;top:337.3px;font-size:11.8px;color:#262626;font-weight:normal;letter-spacing:0.3px;-webkit-text-stroke:0.45px #262626;">Exterior Bound</div><div class="b" style="left:1086px;top:349px;width:1px;height:26px;background:#d9d9d9"></div><div class="b" style="left:1086px;top:374px;width:14px;height:1px;background:#d9d9d9"></div><svg class="b" style="left:1117px;top:368.9px;" width="12" height="12" viewBox="0 0 12 12"><path d="M5.5 0.8 L10.3 3.4 V8.6 L5.5 11.2 L0.7 8.6 V3.4 Z M0.7 3.4 L5.5 6 L10.3 3.4 M5.5 6 V11.2" fill="none" stroke="#666" stroke-width="1.2" stroke-linejoin="round"/></svg><div class="t" style="left:1140.8px;top:369.1px;font-size:12.2px;color:#737373;font-weight:normal;letter-spacing:-0.4px;">Rectangular Bound</div><svg class="b" style="left:1287.2px;top:368.9px;" width="14" height="11" viewBox="0 0 14 11"><path d="M0.6 5.5 Q7 -2.3 13.4 5.5 Q7 13.3 0.6 5.5 Z" fill="#1f1f1f"/><circle cx="7" cy="5.5" r="3" fill="#fff"/><circle cx="7" cy="5.5" r="1.6" fill="#1f1f1f"/></svg><svg class="b" style="left:1083.5px;top:403.5px;" width="7" height="6" viewBox="0 0 7 6"><path d="M0.5 1 H6 L3.25 5 Z" fill="#aaa"/></svg><div class="t" style="left:1094.8px;top:401.5px;font-size:11.8px;color:#262626;font-weight:normal;letter-spacing:0.3px;-webkit-text-stroke:0.45px #262626;">Contour Boundary</div><div class="b" style="left:1086px;top:413px;width:1px;height:59px;background:#d9d9d9"></div><div class="b" style="left:1086px;top:438px;width:14px;height:1px;background:#d9d9d9"></div><svg class="b" style="left:1117px;top:432.7px;" width="12" height="12" viewBox="0 0 12 12"><path d="M0.9 0.2 V9.8 H10.2" fill="none" stroke="#666" stroke-width="1.3"/><path d="M0.9 3.7 H6.3 Q8.2 4 7.3 5.8 Q6.3 7.5 8 9.6" fill="none" stroke="#666" stroke-width="1.1"/></svg><div class="t" style="left:1140.8px;top:432.9px;font-size:12.2px;color:#737373;font-weight:normal;letter-spacing:-0.4px;">Contour Boundary-1</div><svg class="b" style="left:1287.2px;top:432.7px;" width="14" height="11" viewBox="0 0 14 11"><path d="M0.6 5.5 Q7 -2.3 13.4 5.5 Q7 13.3 0.6 5.5 Z" fill="#1f1f1f"/><circle cx="7" cy="5.5" r="3" fill="#fff"/><circle cx="7" cy="5.5" r="1.6" fill="#1f1f1f"/></svg><div class="b" style="left:1086px;top:471px;width:14px;height:1px;background:#d9d9d9"></div><svg class="b" style="left:1117px;top:465.6px;" width="12" height="12" viewBox="0 0 12 12"><path d="M0.9 0.2 V9.8 H10.2" fill="none" stroke="#666" stroke-width="1.3"/><path d="M0.9 3.7 H6.3 Q8.2 4 7.3 5.8 Q6.3 7.5 8 9.6" fill="none" stroke="#666" stroke-width="1.1"/></svg><div class="t" style="left:1140.8px;top:465.8px;font-size:12.2px;color:#737373;font-weight:normal;letter-spacing:-0.4px;">Contour Boundary-2</div><svg class="b" style="left:1287.2px;top:465.6px;" width="14" height="11" viewBox="0 0 14 11"><path d="M0.6 5.5 Q7 -2.3 13.4 5.5 Q7 13.3 0.6 5.5 Z" fill="#1f1f1f"/><circle cx="7" cy="5.5" r="3" fill="#fff"/><circle cx="7" cy="5.5" r="1.6" fill="#1f1f1f"/></svg><div class="t" style="left:1094.8px;top:498.4px;font-size:11.8px;color:#262626;font-weight:normal;letter-spacing:0.3px;-webkit-text-stroke:0.45px #262626;">Snap Line</div><div class="t" style="left:1094.8px;top:529.7px;font-size:11.8px;color:#262626;font-weight:normal;letter-spacing:0.3px;-webkit-text-stroke:0.45px #262626;">Internal Zone</div><div class="b" style="left:1071px;top:555px;width:249px;height:13px;overflow:hidden"><div class="t" style="left:23.8px;top:6.3px;font-size:11.8px;color:#262626;font-weight:normal;letter-spacing:0.3px;-webkit-text-stroke:0.45px #262626;">Door Opening</div></div><svg class="b" style="left:1072px;top:556px;" width="11" height="11" viewBox="0 0 11 11"><path d="M1 1 L10 10 M1 5 L6 10" stroke="#999" stroke-width="0.9"/></svg><div class="b" style="left:1326px;top:55px;width:10px;height:845px;background:linear-gradient(to right,rgba(0,0,0,0) 0%,rgba(0,0,0,0.02) 55%,rgba(0,0,0,0.05) 85%,rgba(0,0,0,0.08) 100%)"></div><div class="b" style="left:1320px;top:443px;width:16px;height:51px;background:rgba(250,250,250,0.9);border-radius:8px 0 0 8px"></div><svg class="b" style="left:1322px;top:461px;" width="10" height="14" viewBox="0 0 10 14"><path d="M2.5 1.5 L7.5 7 L2.5 12.5" fill="none" stroke="#666" stroke-width="1.3"/></svg><div class="b" style="left:1336px;top:55px;width:264px;height:845px;background:#fff"></div><div class="b" style="left:1336px;top:91px;width:264px;height:809px;overflow:hidden"><div class="b" style="left:15px;top:-4.5px;width:113px;height:23px;background:#fff;border:1px solid #e3e3e3;border-radius:2px"></div><div class="t" style="left:23.8px;top:2.1px;font-size:12px;color:#666;font-weight:normal;letter-spacing:-0.3px;">Select</div><svg class="b" style="left:116px;top:5.5px;" width="6" height="4" viewBox="0 0 6 4"><path d="M0.3 0.3 H5.3 L2.8 3.5 Z" fill="#aaa"/></svg><div class="b" style="left:136px;top:-4.5px;width:113px;height:23px;background:#fff;border:1px solid #e3e3e3;border-radius:2px"></div><div class="b" style="left:183px;top:-2.5px;width:18px;height:18px;background:#f0f0f0"></div><svg class="b" style="left:185px;top:-0.5px;" width="14" height="14" viewBox="0 0 14 14"><path d="M7 1.5 V12.5 M1.5 7 H12.5" stroke="#888" stroke-width="1.1"/></svg><div class="t" style="left:15.5px;top:30.3px;font-size:12px;color:#7a7a7a;font-weight:normal;letter-spacing:-0.15px;">Material Angle</div><div class="b" style="left:15px;top:46.5px;width:234px;height:24px;background:#fff;border:1px solid #e3e3e3;border-radius:2px"></div><div class="t" style="left:23.8px;top:53.5px;font-size:12.5px;color:#666;font-weight:normal;letter-spacing:-0.15px;">0</div><svg class="b" style="left:230px;top:53.5px;" width="10" height="12" viewBox="0 0 10 12"><rect x="0.7" y="0.7" width="8.6" height="10.6" fill="none" stroke="#666" stroke-width="1.2"/><rect x="2.2" y="2.3" width="5.6" height="2.6" fill="#666"/><rect x="2.3" y="6.5" width="2" height="1.6" fill="#888"/><rect x="5.7" y="6.5" width="2" height="1.6" fill="#888"/><rect x="2.3" y="8.8" width="2" height="1.4" fill="#888"/><rect x="5.7" y="8.8" width="2" height="1.4" fill="#888"/></svg><div class="t" style="left:15.5px;top:81.1px;font-size:12px;color:#7a7a7a;font-weight:normal;letter-spacing:-0.15px;">Side Material Rotate</div><div class="b" style="left:15px;top:97.5px;width:234px;height:24px;background:#fff;border:1px solid #e3e3e3;border-radius:2px"></div><div class="t" style="left:23.8px;top:104.5px;font-size:12.5px;color:#666;font-weight:normal;letter-spacing:-0.15px;">0</div><svg class="b" style="left:230px;top:104.5px;" width="10" height="12" viewBox="0 0 10 12"><rect x="0.7" y="0.7" width="8.6" height="10.6" fill="none" stroke="#666" stroke-width="1.2"/><rect x="2.2" y="2.3" width="5.6" height="2.6" fill="#666"/><rect x="2.3" y="6.5" width="2" height="1.6" fill="#888"/><rect x="5.7" y="6.5" width="2" height="1.6" fill="#888"/><rect x="2.3" y="8.8" width="2" height="1.4" fill="#888"/><rect x="5.7" y="8.8" width="2" height="1.4" fill="#888"/></svg><div class="t" style="left:15.5px;top:132.1px;font-size:12px;color:#7a7a7a;font-weight:normal;letter-spacing:-0.15px;">Paving Style</div><div class="b" style="left:15px;top:149px;width:234px;height:23px;background:#fff;border:1px solid #e3e3e3;border-radius:2px"></div><div class="t" style="left:24.0px;top:156.4px;font-size:12px;color:#666;font-weight:normal;letter-spacing:-0.3px;">Unselected</div><svg class="b" style="left:232.5px;top:157.5px;" width="11" height="7" viewBox="0 0 11 7"><path d="M1 1.2 L5.5 5.5 L10 1.2" fill="none" stroke="#999" stroke-width="1"/></svg><div class="t" style="left:15.5px;top:182.7px;font-size:12px;color:#7a7a7a;font-weight:normal;letter-spacing:-0.15px;">Rear Material</div><div class="b" style="left:15px;top:199.7px;width:113px;height:23px;background:#fff;border:1px solid #e3e3e3;border-radius:2px"></div><div class="t" style="left:23.8px;top:206.3px;font-size:12px;color:#666;font-weight:normal;letter-spacing:-0.3px;">Select</div><svg class="b" style="left:116px;top:209.7px;" width="6" height="4" viewBox="0 0 6 4"><path d="M0.3 0.3 H5.3 L2.8 3.5 Z" fill="#aaa"/></svg><div class="b" style="left:136px;top:199.7px;width:113px;height:23px;background:#fff;border:1px solid #e3e3e3;border-radius:2px"></div><div class="b" style="left:183px;top:201.7px;width:18px;height:18px;background:#f0f0f0"></div><svg class="b" style="left:185px;top:203.7px;" width="14" height="14" viewBox="0 0 14 14"><path d="M7 1.5 V12.5 M1.5 7 H12.5" stroke="#888" stroke-width="1.1"/></svg><div class="t" style="left:15.5px;top:233.7px;font-size:12px;color:#7a7a7a;font-weight:normal;letter-spacing:-0.15px;">Side Material</div><div class="b" style="left:15px;top:250.3px;width:113px;height:23px;background:#fff;border:1px solid #e3e3e3;border-radius:2px"></div><div class="t" style="left:23.8px;top:256.9px;font-size:12px;color:#666;font-weight:normal;letter-spacing:-0.3px;">Select</div><svg class="b" style="left:116px;top:260.3px;" width="6" height="4" viewBox="0 0 6 4"><path d="M0.3 0.3 H5.3 L2.8 3.5 Z" fill="#aaa"/></svg><div class="b" style="left:136px;top:250.3px;width:113px;height:23px;background:#fff;border:1px solid #e3e3e3;border-radius:2px"></div><div class="b" style="left:183px;top:252.3px;width:18px;height:18px;background:#f0f0f0"></div><svg class="b" style="left:185px;top:254.3px;" width="14" height="14" viewBox="0 0 14 14"><path d="M7 1.5 V12.5 M1.5 7 H12.5" stroke="#888" stroke-width="1.1"/></svg><div class="t" style="left:11.5px;top:294.0px;font-size:12.2px;color:#333;font-weight:normal;letter-spacing:0px;-webkit-text-stroke:0.35px #333;">Design Attribute</div><svg class="b" style="left:238px;top:293px;" width="14" height="9" viewBox="0 0 14 9"><path d="M1.5 7.5 L7 2 L12.5 7.5" fill="none" stroke="#666" stroke-width="1.2"/></svg><div class="t" style="left:15.5px;top:323.4px;font-size:12px;color:#7a7a7a;font-weight:normal;letter-spacing:-0.15px;">Position Method</div><div class="b" style="left:15px;top:340.40000000000003px;width:234px;height:23px;background:#fff;border:1px solid #e3e3e3;border-radius:2px"></div><div class="t" style="left:24.0px;top:347.8px;font-size:12px;color:#666;font-weight:normal;letter-spacing:-0.3px;">Lower Left Rear</div><svg class="b" style="left:232.5px;top:348.90000000000003px;" width="11" height="7" viewBox="0 0 11 7"><path d="M1 1.2 L5.5 5.5 L10 1.2" fill="none" stroke="#999" stroke-width="1"/></svg><div class="t" style="left:15.5px;top:374.0px;font-size:12px;color:#7a7a7a;font-weight:normal;letter-spacing:-0.15px;">Hide Conditions</div><div class="b" style="left:15px;top:391.0px;width:234px;height:23px;background:#fff;border:1px solid #e3e3e3;border-radius:2px"></div><div class="t" style="left:24.0px;top:398.4px;font-size:12px;color:#666;font-weight:normal;letter-spacing:-0.3px;">No</div><svg class="b" style="left:232.5px;top:399.5px;" width="11" height="7" viewBox="0 0 11 7"><path d="M1 1.2 L5.5 5.5 L10 1.2" fill="none" stroke="#999" stroke-width="1"/></svg><div class="t" style="left:15.5px;top:425.3px;font-size:12px;color:#7a7a7a;font-weight:normal;letter-spacing:-0.15px;">Replaceable</div><div class="b" style="left:15px;top:442.29999999999995px;width:234px;height:23px;background:#fff;border:1px solid #e3e3e3;border-radius:2px"></div><div class="t" style="left:24.0px;top:449.7px;font-size:12px;color:#666;font-weight:normal;letter-spacing:-0.3px;">Yes</div><svg class="b" style="left:232.5px;top:450.79999999999995px;" width="11" height="7" viewBox="0 0 11 7"><path d="M1 1.2 L5.5 5.5 L10 1.2" fill="none" stroke="#999" stroke-width="1"/></svg><div class="t" style="left:15.5px;top:475.3px;font-size:12px;color:#7a7a7a;font-weight:normal;letter-spacing:-0.15px;">Quotation Required</div><div class="b" style="left:15px;top:492.29999999999995px;width:234px;height:23px;background:#fff;border:1px solid #e3e3e3;border-radius:2px"></div><div class="t" style="left:24.0px;top:499.7px;font-size:12px;color:#666;font-weight:normal;letter-spacing:-0.3px;">No</div><svg class="b" style="left:232.5px;top:500.79999999999995px;" width="11" height="7" viewBox="0 0 11 7"><path d="M1 1.2 L5.5 5.5 L10 1.2" fill="none" stroke="#999" stroke-width="1"/></svg><div class="t" style="left:15.5px;top:526.7px;font-size:12px;color:#7a7a7a;font-weight:normal;letter-spacing:-0.15px;">Removable</div><div class="b" style="left:15px;top:543.6999999999999px;width:234px;height:23px;background:#fff;border:1px solid #e3e3e3;border-radius:2px"></div><div class="t" style="left:24.0px;top:551.1px;font-size:12px;color:#666;font-weight:normal;letter-spacing:-0.3px;">Yes</div><svg class="b" style="left:232.5px;top:552.1999999999999px;" width="11" height="7" viewBox="0 0 11 7"><path d="M1 1.2 L5.5 5.5 L10 1.2" fill="none" stroke="#999" stroke-width="1"/></svg><div class="t" style="left:15.5px;top:577.6px;font-size:12px;color:#7a7a7a;font-weight:normal;letter-spacing:-0.15px;">Component Removable</div><div class="b" style="left:15px;top:594.5999999999999px;width:234px;height:23px;background:#fff;border:1px solid #e3e3e3;border-radius:2px"></div><div class="t" style="left:24.0px;top:602.0px;font-size:12px;color:#666;font-weight:normal;letter-spacing:-0.3px;">Unselected</div><svg class="b" style="left:232.5px;top:603.0999999999999px;" width="11" height="7" viewBox="0 0 11 7"><path d="M1 1.2 L5.5 5.5 L10 1.2" fill="none" stroke="#999" stroke-width="1"/></svg><div class="t" style="left:15.5px;top:629.0px;font-size:12px;color:#7a7a7a;font-weight:normal;letter-spacing:-0.15px;">Style Pack</div><div class="b" style="left:15px;top:646.5px;width:234px;height:26px;background:#fff;border:1px solid #e3e3e3;border-radius:2px"></div><div class="t" style="left:115.5px;top:653.8px;font-size:12px;color:#666;font-weight:normal;letter-spacing:-0.3px;">Select</div><div class="t" style="left:15.5px;top:683.7px;font-size:12px;color:#7a7a7a;font-weight:normal;letter-spacing:-0.15px;">BOM Output</div><div class="b" style="left:15px;top:700.6999999999999px;width:234px;height:23px;background:#fff;border:1px solid #e3e3e3;border-radius:2px"></div><div class="t" style="left:24.0px;top:708.1px;font-size:12px;color:#666;font-weight:normal;letter-spacing:-0.3px;">Yes</div><svg class="b" style="left:232.5px;top:709.1999999999999px;" width="11" height="7" viewBox="0 0 11 7"><path d="M1 1.2 L5.5 5.5 L10 1.2" fill="none" stroke="#999" stroke-width="1"/></svg><div class="t" style="left:15.5px;top:734.5px;font-size:12px;color:#7a7a7a;font-weight:normal;letter-spacing:-0.15px;">Parameter Editable</div><div class="b" style="left:15px;top:751.5px;width:234px;height:23px;background:#fff;border:1px solid #e3e3e3;border-radius:2px"></div><div class="t" style="left:24.0px;top:758.9px;font-size:12px;color:#666;font-weight:normal;letter-spacing:-0.3px;">Yes</div><svg class="b" style="left:232.5px;top:760.0px;" width="11" height="7" viewBox="0 0 11 7"><path d="M1 1.2 L5.5 5.5 L10 1.2" fill="none" stroke="#999" stroke-width="1"/></svg><div class="t" style="left:15.5px;top:785.1px;font-size:12px;color:#7a7a7a;font-weight:normal;letter-spacing:-0.15px;">Ignore Internal Interference</div><div class="b" style="left:15px;top:802.5px;width:234px;height:23px;background:#fff;border:1px solid #e3e3e3;border-radius:2px"></div></div><div class="b" style="left:1336px;top:55px;width:264px;height:36px;background:#fff;border-bottom:1px solid #ececec"></div><div class="t" style="left:1347.7px;top:67.4px;font-size:11.3px;color:#6e6e6e;font-weight:normal;letter-spacing:-0.2px;">Flat Panel-1</div><svg class="b" style="left:1418px;top:66px;" width="14" height="14" viewBox="0 0 14 14"><path d="M1 13 L1.6 10.2 L8.8 3 L11 5.2 L3.8 12.4 Z" fill="#666"/><path d="M9.8 2 L11 0.8 L13.2 3 L12 4.2 Z" fill="#666"/></svg><svg class="b" style="left:0;top:0" width="1600" height="900"><polygon points="1002.0,711.0 1336.8,605.7 1337.5,608.0 1345.8,599.4 1334.1,597.3 1334.8,599.6 1001.6,710.0" fill="#fb1a10"/></svg>
</body></html>
